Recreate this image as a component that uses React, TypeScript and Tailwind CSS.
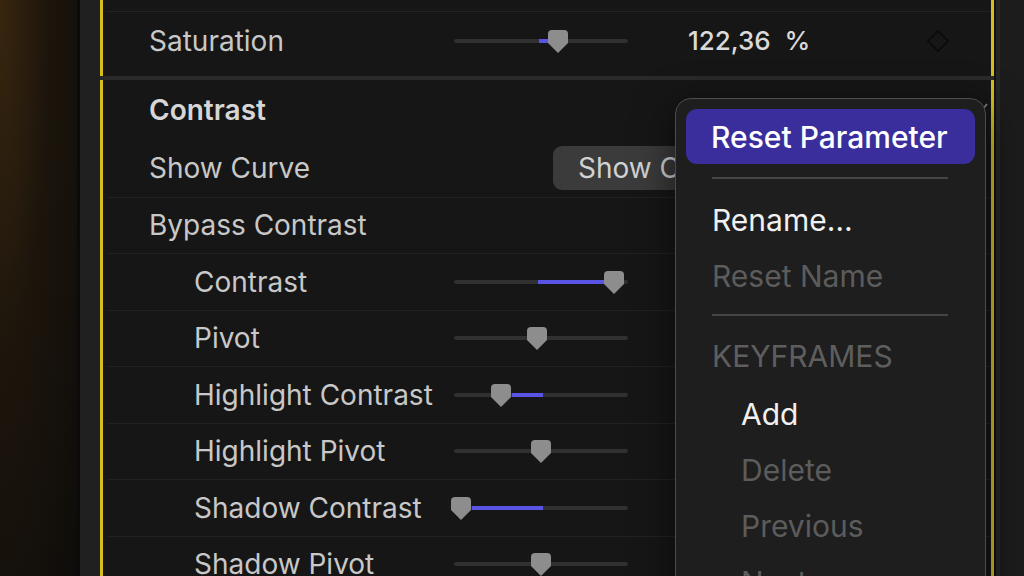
import React from "react";

type SliderSpec = { thumb: number; fill?: [number, number] };

const ui = "font-['Inter','Noto_Sans',sans-serif]";

function Slider({ thumb, fill }: SliderSpec) {
  return (
    <div className="relative h-[24px] w-[174px] shrink-0">
      <div className="absolute left-0 right-0 top-[10px] h-[4px] rounded-full bg-[#303030]" />
      {fill && (
        <div
          className="absolute top-[10px] h-[4px] bg-[#5a54e4]"
          style={{ left: fill[0], width: fill[1] - fill[0] }}
        />
      )}
      <svg
        className="absolute top-[1px]"
        style={{ left: thumb - 10 }}
        width="20"
        height="23"
        viewBox="0 0 20 23"
      >
        <path d="M4 0H16Q20 0 20 4V13L10 23L0 13V4Q0 0 4 0Z" fill="#8d8d8d" />
      </svg>
    </div>
  );
}

function ParamRow({
  label,
  indent = false,
  slider,
  children,
  divider = true,
}: {
  label: string;
  indent?: boolean;
  slider?: SliderSpec;
  children?: React.ReactNode;
  divider?: boolean;
}) {
  return (
    <div
      className={`ml-[4px] flex h-[56.5px] shrink-0 items-center ${divider ? "border-t border-[#222222]" : ""}`}
    >
      <div
        className={`w-[347px] shrink-0 whitespace-nowrap text-[28px] leading-none text-[#c8c8c8] ${indent ? "pl-[87px]" : "pl-[42px]"}`}
      >
        {label}
      </div>
      {slider && <Slider {...slider} />}
      {children}
    </div>
  );
}

function MenuItem({
  label,
  dim = false,
  inset = false,
}: {
  label: string;
  dim?: boolean;
  inset?: boolean;
}) {
  return (
    <div
      className={`flex h-[56px] items-center whitespace-nowrap text-[30px] leading-none ${inset ? "pl-[65px]" : "pl-[36px]"} ${dim ? "text-[#5c5c5c]" : "text-[#f0f0f0]"}`}
    >
      {label}
    </div>
  );
}

function MenuSeparator({ h }: { h: string }) {
  return (
    <div className={`flex items-center pl-[36px] pr-[37px] ${h}`}>
      <div className="h-[1.5px] w-full bg-[#454545]" />
    </div>
  );
}

function ContextMenu() {
  return (
    <div className="absolute left-[675px] top-[98px] h-[520px] w-[311px] overflow-hidden rounded-[16px] border-[1.5px] border-[#4c4c4c] bg-[#1e1e1e] shadow-[0_10px_40px_rgba(0,0,0,0.6)]">
      <div className="px-[10px] pt-[10px]">
        <div className="flex h-[55px] items-center whitespace-nowrap rounded-[11px] bg-[#3a2e9c] pl-[25px] text-[30px] font-medium leading-none text-white">
          Reset Parameter
        </div>
      </div>
      <MenuSeparator h="h-[28px]" />
      <MenuItem label="Rename…" />
      <MenuItem label="Reset Name" dim />
      <MenuSeparator h="h-[22px]" />
      <div className="flex h-[60px] items-center pl-[36px] text-[30px] leading-none text-[#5e5e5e]">
        KEYFRAMES
      </div>
      <MenuItem label="Add" inset />
      <MenuItem label="Delete" dim inset />
      <MenuItem label="Previous" dim inset />
      <MenuItem label="Next" dim inset />
    </div>
  );
}

export default function App() {
  return (
    <div className={`relative flex h-[576px] w-[1024px] overflow-hidden bg-[#161616] ${ui}`}>
      {/* viewer edge */}
      <div className="w-[77px] shrink-0 bg-[radial-gradient(ellipse_at_top_left,#38260f_0%,#1c150c_45%,#0e0c0a_100%)]" />
      <div className="w-[3px] shrink-0 bg-[#0b0b0b]" />
      <div className="w-[20px] shrink-0 bg-[#202020]" />

      {/* inspector */}
      <div className="flex w-[894px] shrink-0 flex-col">
        <div className="flex h-[76px] shrink-0 flex-col border-x-[3px] border-[#d6bf1a]">
          <div className="ml-[4px] h-[12px] shrink-0 border-b border-[#232323]" />
          <div className="ml-[4px] flex flex-1 items-center pb-[6px]">
            <div className="w-[347px] shrink-0 pl-[42px] text-[28px] leading-none text-[#c8c8c8]">
              Saturation
            </div>
            <Slider thumb={104} fill={[85, 94]} />
            <div className="ml-[60px] w-[205px] shrink-0 whitespace-nowrap text-[26px] font-medium leading-none text-[#dadada]">
              122,36&nbsp;&nbsp;%
            </div>
            <svg className="ml-[33px] shrink-0" width="24" height="24" viewBox="0 0 24 24">
              <path d="M12 2L22 12L12 22L2 12Z" fill="none" stroke="#0a0a0a" strokeWidth="1.6" />
            </svg>
          </div>
        </div>

        <div className="h-[4px] shrink-0 bg-[#2a2a2a]" />

        <div className="flex flex-1 flex-col border-x-[3px] border-[#d6bf1a]">
          <div className="ml-[4px] flex h-[60px] shrink-0 items-center pl-[42px] text-[28px] font-semibold leading-none text-[#d6d6d6]">
            Contrast
          </div>
          <ParamRow label="Show Curve" divider={false}>
            <div className="ml-[99px] flex h-[44px] w-[160px] shrink-0 items-center overflow-hidden whitespace-nowrap rounded-[9px] bg-[#3b3b3b] pl-[25px] text-[28px] leading-none text-[#d2d2d2]">
              Show Curve
            </div>
          </ParamRow>
          <ParamRow label="Bypass Contrast" />
          <ParamRow label="Contrast" indent slider={{ thumb: 160, fill: [84, 150] }} />
          <ParamRow label="Pivot" indent slider={{ thumb: 83 }} />
          <ParamRow label="Highlight Contrast" indent slider={{ thumb: 47, fill: [58, 89] }} />
          <ParamRow label="Highlight Pivot" indent slider={{ thumb: 87 }} />
          <ParamRow label="Shadow Contrast" indent slider={{ thumb: 7, fill: [18, 89] }} />
          <ParamRow label="Shadow Pivot" indent slider={{ thumb: 87 }} />
        </div>
      </div>

      <div className="flex flex-1">
        <div className="w-[2px] bg-[#121212]" />
        <div className="w-[4px] bg-[#262626]" />
        <div className="flex-1 bg-[#1c1c1c]" />
      </div>

      {/* disclosure chevron peeking out behind the menu */}
      <svg className="absolute left-[979px] top-[102px]" width="10" height="10" viewBox="0 0 10 10">
        <path d="M3 8L8 2" stroke="#8a8a8a" strokeWidth="1.6" fill="none" />
      </svg>

      <ContextMenu />
    </div>
  );
}
